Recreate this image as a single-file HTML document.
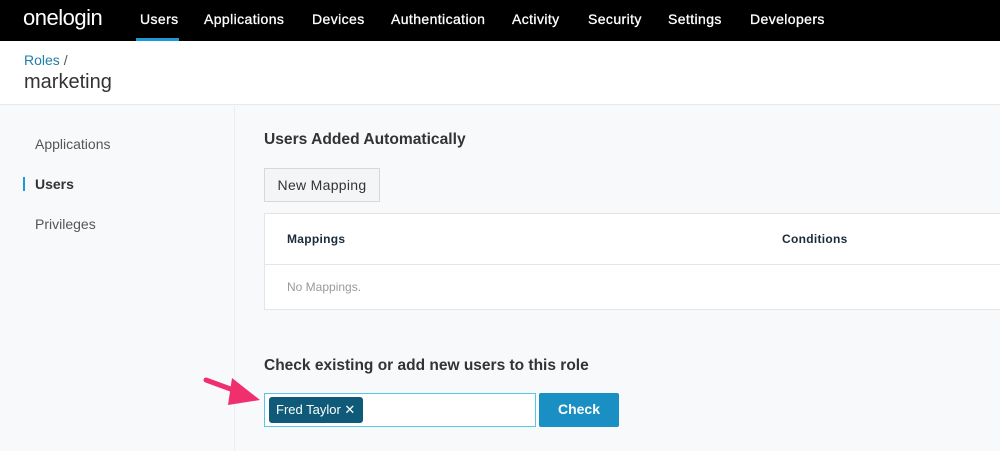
<!DOCTYPE html>
<html><head><style>
*{margin:0;padding:0;box-sizing:border-box}
body{width:1000px;height:451px;overflow:hidden;background:#f8f9fa;font-family:"Liberation Sans",sans-serif;position:relative}
.nav{position:absolute;left:0;top:0;width:1000px;height:41px;background:#000;color:#fff}
.nav span{position:absolute;top:11px;font-size:14px;letter-spacing:0.4px;-webkit-text-stroke:0.3px #fff}
.logo{position:absolute;left:23px;top:5px;font-size:22px;color:#fff;letter-spacing:-0.5px}
.ul{position:absolute;left:136px;top:38px;width:43px;height:3px;background:#1d9ad6}
.head{position:absolute;left:0;top:41px;width:1000px;height:64px;background:#fff;border-bottom:1px solid #e6e8ea}
.t{position:absolute;white-space:nowrap}
.side{position:absolute;left:234px;top:106px;width:1px;height:345px;background:#eceef0}
.box{position:absolute;left:264px;top:213px;width:740px;height:97px;background:#fff;border:1px solid #e3e5e7}
</style></head><body>
<div class="nav">
<div class="logo">onelogin</div>
<span style="left:140px">Users</span>
<span style="left:204px">Applications</span>
<span style="left:312px">Devices</span>
<span style="left:391px">Authentication</span>
<span style="left:512px">Activity</span>
<span style="left:588px">Security</span>
<span style="left:668px">Settings</span>
<span style="left:750px">Developers</span>
<div class="ul"></div>
</div>
<div class="head">
<div class="t" style="left:24px;top:11px;font-size:14px;color:#1f7ea8">Roles <span style="color:#555">/</span></div>
<div class="t" style="left:24px;top:30px;font-size:20px;color:#333">marketing</div>
</div>
<div class="side"></div>
<div class="t" style="left:35px;top:136px;font-size:14px;color:#555">Applications</div>
<div style="position:absolute;left:23px;top:177px;width:2px;height:14px;background:#1d9ad6"></div>
<div class="t" style="left:35px;top:176px;font-size:14px;color:#333;font-weight:bold">Users</div>
<div class="t" style="left:35px;top:216px;font-size:14px;color:#555">Privileges</div>
<div class="t" style="left:264px;top:131px;font-size:15.6px;color:#333;font-weight:bold">Users Added Automatically</div>
<div style="position:absolute;left:264px;top:168px;width:116px;height:34px;background:#f4f5f6;border:1px solid #d6d8da;font-size:14px;color:#333;text-align:center;line-height:32px;letter-spacing:0.3px">New Mapping</div>
<div class="box">
<div style="position:absolute;left:0;top:50px;width:100%;height:1px;background:#e3e5e7"></div>
<div class="t" style="left:22px;top:18px;font-size:12px;font-weight:bold;color:#1b2b3a;letter-spacing:0.3px">Mappings</div>
<div class="t" style="left:517px;top:18px;font-size:12px;font-weight:bold;color:#1b2b3a;letter-spacing:0.3px">Conditions</div>
<div class="t" style="left:22px;top:66px;font-size:12px;color:#999">No Mappings.</div>
</div>
<div class="t" style="left:264px;top:357px;font-size:15.5px;color:#333;font-weight:bold">Check existing or add new users to this role</div>
<div style="position:absolute;left:264px;top:393px;width:272px;height:34px;background:#fff;border:1px solid #5bc5e6"></div>
<div style="position:absolute;left:269px;top:397px;width:94px;height:26px;background:#0f5a78;border-radius:3px;color:#fff;font-size:13px;line-height:26px;padding-left:7px">Fred Taylor ✕</div>
<div style="position:absolute;left:539px;top:393px;width:80px;height:34px;background:#1a8fc4;border-radius:2px;color:#fff;font-size:14px;font-weight:bold;text-align:center;line-height:33px">Check</div>
<svg style="position:absolute;left:0;top:0" width="1000" height="451"><path d="M206,380 L236,391" stroke="#f0306e" stroke-width="5" stroke-linecap="round"/><path d="M260,400 L232,378 L228,405 Z" fill="#f0306e"/></svg>
</body></html>
